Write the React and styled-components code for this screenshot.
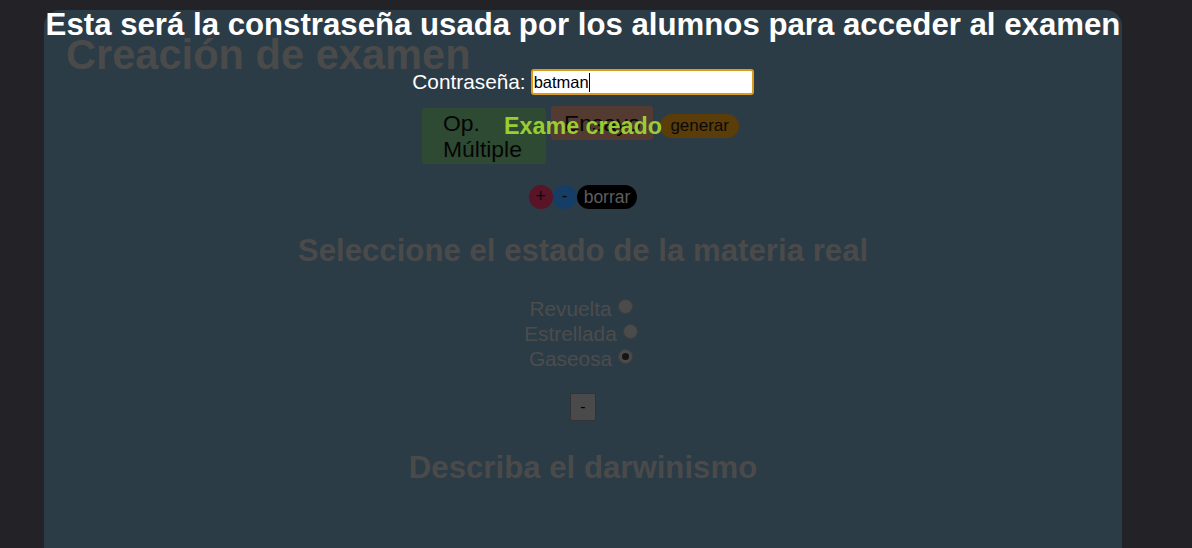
import React from "react";
import styled, { createGlobalStyle } from "styled-components";

const Global = createGlobalStyle`
  html, body { margin: 0; padding: 0; background: #232327; }
  body { font-family: "Liberation Sans", Arial, sans-serif; overflow: hidden; }
`;

const Page = styled.div`
  height: 548px;
  padding: 10px 0 0 44px;
  box-sizing: border-box;
`;

const Panel = styled.div`
  position: relative;
  width: 1078px;
  height: 538px;
  background: #2b3c47;
  border-radius: 16px 16px 0 0;
  padding-top: 31px;
  box-sizing: border-box;
`;

const Notice = styled.div`
  position: absolute;
  top: -2px;
  left: 0;
  right: 0;
  text-align: center;
  color: #ffffff;
  font-size: 31.2px;
  font-weight: bold;
  line-height: 34px;
  white-space: nowrap;
`;

const Title = styled.h1`
  margin: 0;
  padding-left: 22px;
  font-size: 41.6px;
  line-height: 28px;
  font-weight: bold;
  color: #4a4a4a;
`;

const PasswordRow = styled.div`
  display: flex;
  align-items: center;
  justify-content: center;
  gap: 5px;
  height: 26px;
`;

const Label = styled.label`
  color: #ffffff;
  font-size: 20.8px;
`;

const Field = styled.div`
  position: relative;
  display: flex;
`;

const Input = styled.input`
  width: 223px;
  height: 26px;
  box-sizing: border-box;
  border: 2px solid #d99c1e;
  border-radius: 3px;
  background: #ffffff;
  padding: 0 1px;
  font-family: "Liberation Sans", Arial, sans-serif;
  font-size: 16.5px;
  color: #000;
  caret-color: transparent;
  outline: none;
`;

const Caret = styled.span`
  position: absolute;
  left: 58px;
  top: 4px;
  width: 1px;
  height: 19px;
  background: #000;
  pointer-events: none;
`;

const TypeRow = styled.div`
  display: flex;
  justify-content: center;
  align-items: baseline;
  margin-top: 11px;
  padding-right: 5px;
`;

const TypeButton = styled.div`
  background: ${(p) => p.$bg};
  color: #050505;
  font-size: 22.9px;
  line-height: 26px;
  padding: ${(p) => p.$pad};
  width: ${(p) => p.$w};
  box-sizing: border-box;
  border-radius: 3px;
  margin-right: ${(p) => p.$mr || "0"};
`;

const Pill = styled.div`
  background: ${(p) => p.$bg};
  color: ${(p) => p.$fg};
  font-size: ${(p) => p.$fs || "17px"};
  line-height: 20px;
  padding: 2px ${(p) => p.$px || "10px"};
  border-radius: 12px;
`;

const Created = styled.div`
  position: absolute;
  top: 103px;
  left: 460px;
  color: #9acd32;
  font-size: 23.3px;
  font-weight: bold;
  line-height: 26px;
`;

const ActionRow = styled.div`
  display: flex;
  justify-content: center;
  align-items: center;
  margin-top: 21px;
`;

const Circle = styled.div`
  width: 24px;
  height: 24px;
  border-radius: 50%;
  background: ${(p) => p.$bg};
  color: #0a0a0a;
  font-size: 17.5px;
  line-height: 23px;
  text-align: center;
`;

const Question = styled.h2`
  margin: ${(p) => p.$mt} 0 0;
  text-align: center;
  font-size: 31.2px;
  line-height: 34px;
  font-weight: bold;
  color: #4a4a4a;
`;

const Options = styled.div`
  margin-top: 28px;
  display: flex;
  flex-direction: column;
  align-items: center;
  padding-right: 4px;
`;

const Option = styled.label`
  display: flex;
  align-items: center;
  gap: 6px;
  font-size: 20.8px;
  line-height: 25px;
  color: #4c4c4c;
`;

const Radio = styled.span`
  width: 15px;
  height: 15px;
  box-sizing: border-box;
  border-radius: 50%;
  background: #4b4b4b;
  border: 1px solid #3e3e3e;
  margin-top: -4px;
  display: flex;
  align-items: center;
  justify-content: center;
  &::after {
    content: "";
    width: 7px;
    height: 7px;
    border-radius: 50%;
    background: ${(p) => (p.$checked ? "#151515" : "transparent")};
  }
`;

const MinusRow = styled.div`
  display: flex;
  justify-content: center;
  margin-top: 22px;
`;

const SquareButton = styled.button`
  width: 26px;
  height: 28px;
  padding: 0;
  background: #4a4a4a;
  border: 1px solid #333333;
  border-radius: 2px;
  color: #000;
  font-family: "Liberation Sans", Arial, sans-serif;
  font-size: 16px;
`;

export default function App() {
  return (
    <>
      <Global />
      <Page>
        <Panel>
          <Notice>Esta será la constraseña usada por los alumnos para acceder al examen</Notice>
          <Title>Creación de examen</Title>
          <PasswordRow>
            <Label htmlFor="pw">Contraseña:</Label>
            <Field>
              <Input id="pw" defaultValue="batman" />
              <Caret />
            </Field>
          </PasswordRow>
          <TypeRow>
            <TypeButton $bg="#2e4a33" $pad="2px 20px 2px 21px" $w="124px" $mr="5px">
              Op. Múltiple
            </TypeButton>
            <TypeButton $bg="#533b31" $pad="4px 13px" $mr="7px">
              Ensayo
            </TypeButton>
            <Pill $bg="#5a3d08" $fg="#0a0a0a">generar</Pill>
          </TypeRow>
          <Created>Exame creado</Created>
          <ActionRow>
            <Circle $bg="#5a1428">+</Circle>
            <Circle $bg="#143e66">-</Circle>
            <Pill $bg="#000000" $fg="#5e5e5e" $fs="17.5px" $px="7px">borrar</Pill>
          </ActionRow>
          <Question $mt="25px">Seleccione el estado de la materia real</Question>
          <Options>
            <Option>Revuelta <Radio /></Option>
            <Option>Estrellada <Radio /></Option>
            <Option>Gaseosa <Radio $checked /></Option>
          </Options>
          <MinusRow>
            <SquareButton>-</SquareButton>
          </MinusRow>
          <Question $mt="30px">Describa el darwinismo</Question>
        </Panel>
      </Page>
    </>
  );
}
